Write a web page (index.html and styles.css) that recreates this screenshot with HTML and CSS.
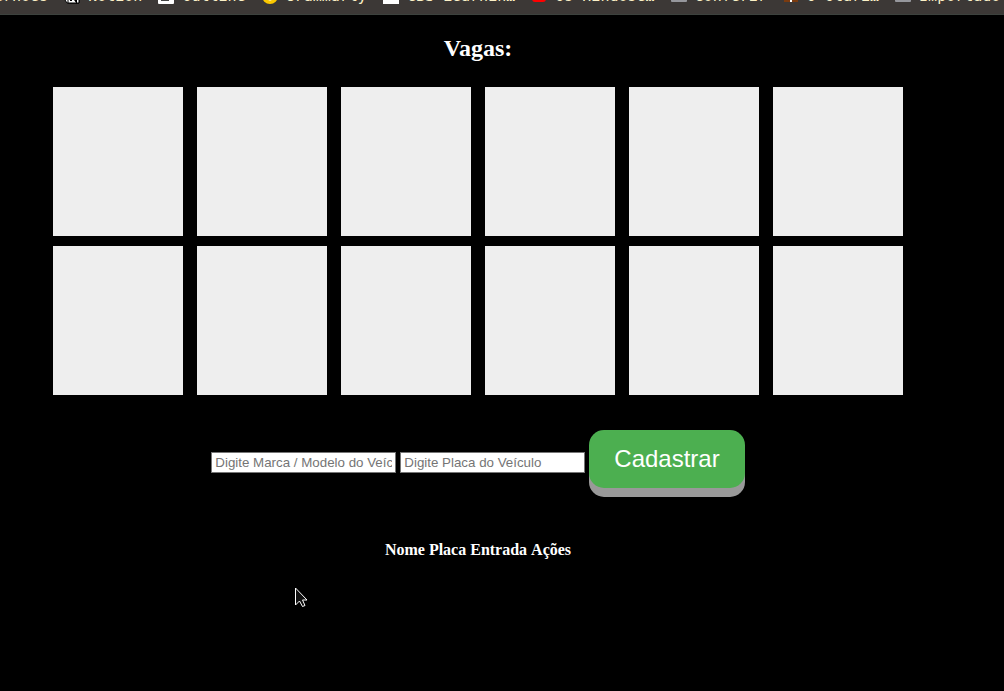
FILE: index.html
```html
<!DOCTYPE html>
<html lang="pt-BR">
<head>
<meta charset="utf-8">
<meta name="viewport" content="width=device-width, initial-scale=1">
<title>Vagas</title>
<link rel="stylesheet" href="styles.css">
</head>
<body>
<nav class="bookmarks" aria-label="Favoritos">
  <a class="bookmark" href="#">ernoes</a>
  <a class="bookmark" href="#"><svg class="icon" viewBox="0 0 16 16"><path d="M1 1h11l3 3v11H3l-2-3z" fill="#fff" stroke="#000"/><path d="M4 4h11v11H4z" fill="#fff" stroke="#000"/><path d="M7 13V6l5 7V6" fill="none" stroke="#000" stroke-width="2"/></svg>Notion</a>
  <a class="bookmark" href="#"><svg class="icon" viewBox="0 0 16 16"><rect width="16" height="16" rx="1" fill="#fff"/><path d="M3 3h8v10H3z" fill="#444"/><path d="M11 5h2v7h-2z" fill="#888"/></svg>Outline</a>
  <a class="bookmark" href="#"><svg class="icon" viewBox="0 0 16 16"><circle cx="8" cy="8" r="8" fill="#fbc800"/><path d="M5 11q3 3 6 0" fill="#fff"/></svg>Grammarly</a>
  <a class="bookmark" href="#"><svg class="icon" viewBox="0 0 16 16"><path d="M0 0h16v16H0z" fill="#fff"/></svg>CBS Learnin…</a>
  <a class="bookmark" href="#"><svg class="icon" viewBox="0 0 16 16"><rect x="1" y="2" width="14" height="12" rx="3" fill="#f00"/></svg>Os Hindose…</a>
  <a class="bookmark" href="#"><svg class="icon" viewBox="0 0 16 16"><rect y="2" width="16" height="12" rx="1" fill="#96979c"/></svg>Conferir</a>
  <a class="bookmark" href="#"><svg class="icon" viewBox="0 0 16 16"><path d="M1 2h14v12H1z" fill="#7a3b10"/><path d="M7 8h2v6H7z" fill="#fff"/></svg>O Otari…</a>
  <a class="bookmark" href="#"><svg class="icon" viewBox="0 0 16 16"><rect y="2" width="16" height="12" rx="1" fill="#96979c"/></svg>Importado</a>
</nav>
<main class="page">
  <h1 class="title">Vagas:</h1>
  <section class="spots" aria-label="Vagas">
    <div class="spot"></div><div class="spot"></div><div class="spot"></div>
    <div class="spot"></div><div class="spot"></div><div class="spot"></div>
    <div class="spot"></div><div class="spot"></div><div class="spot"></div>
    <div class="spot"></div><div class="spot"></div><div class="spot"></div>
  </section>
  <form class="form">
    <input class="field" type="text" aria-label="Marca / Modelo do Veículo" placeholder="Digite Marca / Modelo do Veículo">
    <input class="field" type="text" aria-label="Placa do Veículo" placeholder="Digite Placa do Veículo">
    <button class="submit" type="button">Cadastrar</button>
  </form>
  <table class="cars">
    <thead><tr><th>Nome</th><th>Placa</th><th>Entrada</th><th>Ações</th></tr></thead>
    <tbody></tbody>
  </table>
</main>
<svg class="cursor" viewBox="0 0 14 21" aria-hidden="true"><path d="M1.500 1v17l4-4 3 5.500 2.500-1-2.500-5.500h4.500z" fill="#111" stroke="#fff"/></svg>
</body>
</html>
```
FILE: styles.css
```css
* { box-sizing: border-box; }

body {
  margin: 0;
  background: #000;
  color: #fff;
  font-family: "Liberation Serif", "Times New Roman", serif;
  overflow-x: hidden;
}

.bookmarks {
  display: flex;
  align-items: flex-end;
  gap: 16px;
  height: 15px;
  padding-bottom: 9px;
  overflow: hidden;
  background: #3c3836;
  border-bottom: 1px solid #3d423e;
}

.bookmark {
  display: flex;
  flex: none;
  align-items: center;
  gap: 8px;
  color: #fbf1c7;
  font: 15px/18px "DejaVu Sans Mono", monospace;
  text-decoration: none;
}

.bookmark:first-child { margin-left: -6px; }

.icon {
  width: 16px;
  height: 16px;
}

.page {
  display: flex;
  flex-direction: column;
  align-items: center;
  padding: 20px 48px 0 0;
}

.title {
  margin: 0;
  font-size: 24px;
  line-height: 27px;
}

.spots {
  display: grid;
  grid-template-columns: repeat(6, 130px);
  gap: 10px 14px;
  margin-top: 25px;
}

.spot {
  height: 149px;
  background: #eee;
}

.form {
  display: flex;
  align-items: baseline;
  gap: 4px;
  margin-top: 35px;
}

.field {
  width: 185px;
  height: 21px;
  padding: 2px 3px;
  border: 1px solid #767676;
  background: #fff;
  font-family: "Liberation Sans", Arial, sans-serif;
}

.field::placeholder { color: #757575; }

.submit {
  padding: 15px 25px;
  border: 0;
  border-radius: 15px;
  background: #4caf50;
  box-shadow: 0 9px #999;
  color: #fff;
  font: 24px/28px "Liberation Sans", Arial, sans-serif;
}

.cars {
  margin-top: 50px;
  border-spacing: 2px;
  font-size: 16px;
}

.cars th { padding: 1px; }

.cursor {
  position: absolute;
  top: 587px;
  left: 294px;
  width: 14px;
  height: 21px;
}
```
